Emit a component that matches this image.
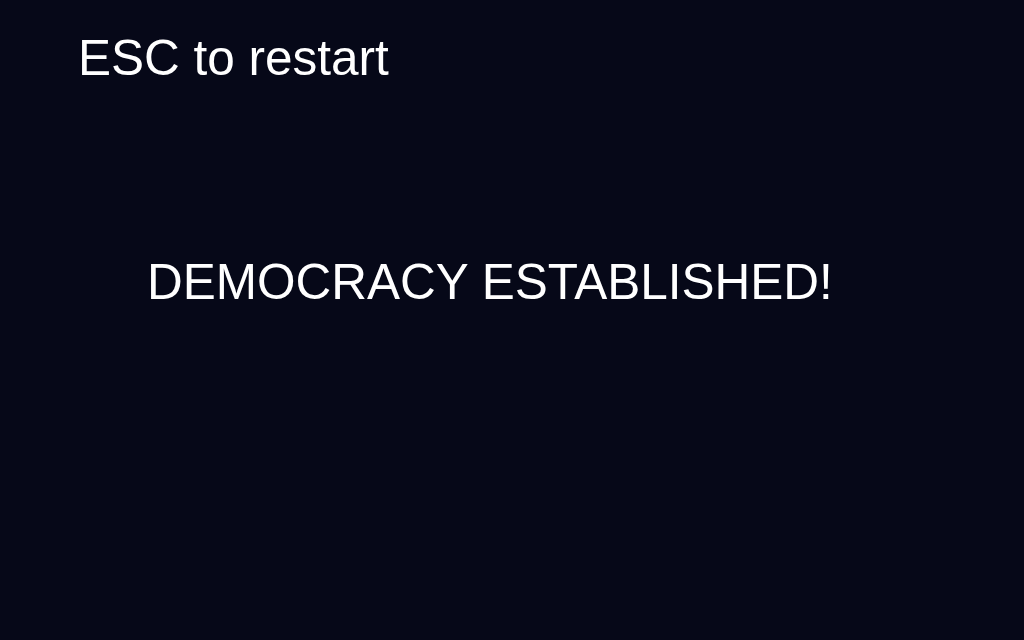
import React from "react";

function App() {
  return (
    <div className="w-[1024px] h-[640px] bg-[#060818] text-white font-['Liberation_Sans',Arial,sans-serif] overflow-hidden">
      <div className="pt-[33px] pl-[78px] text-[49.5px] leading-none">ESC to restart</div>
      <div className="mt-[174px] pl-[147px] text-[49.5px] leading-none">DEMOCRACY ESTABLISHED!</div>
    </div>
  );
}

export default App;
